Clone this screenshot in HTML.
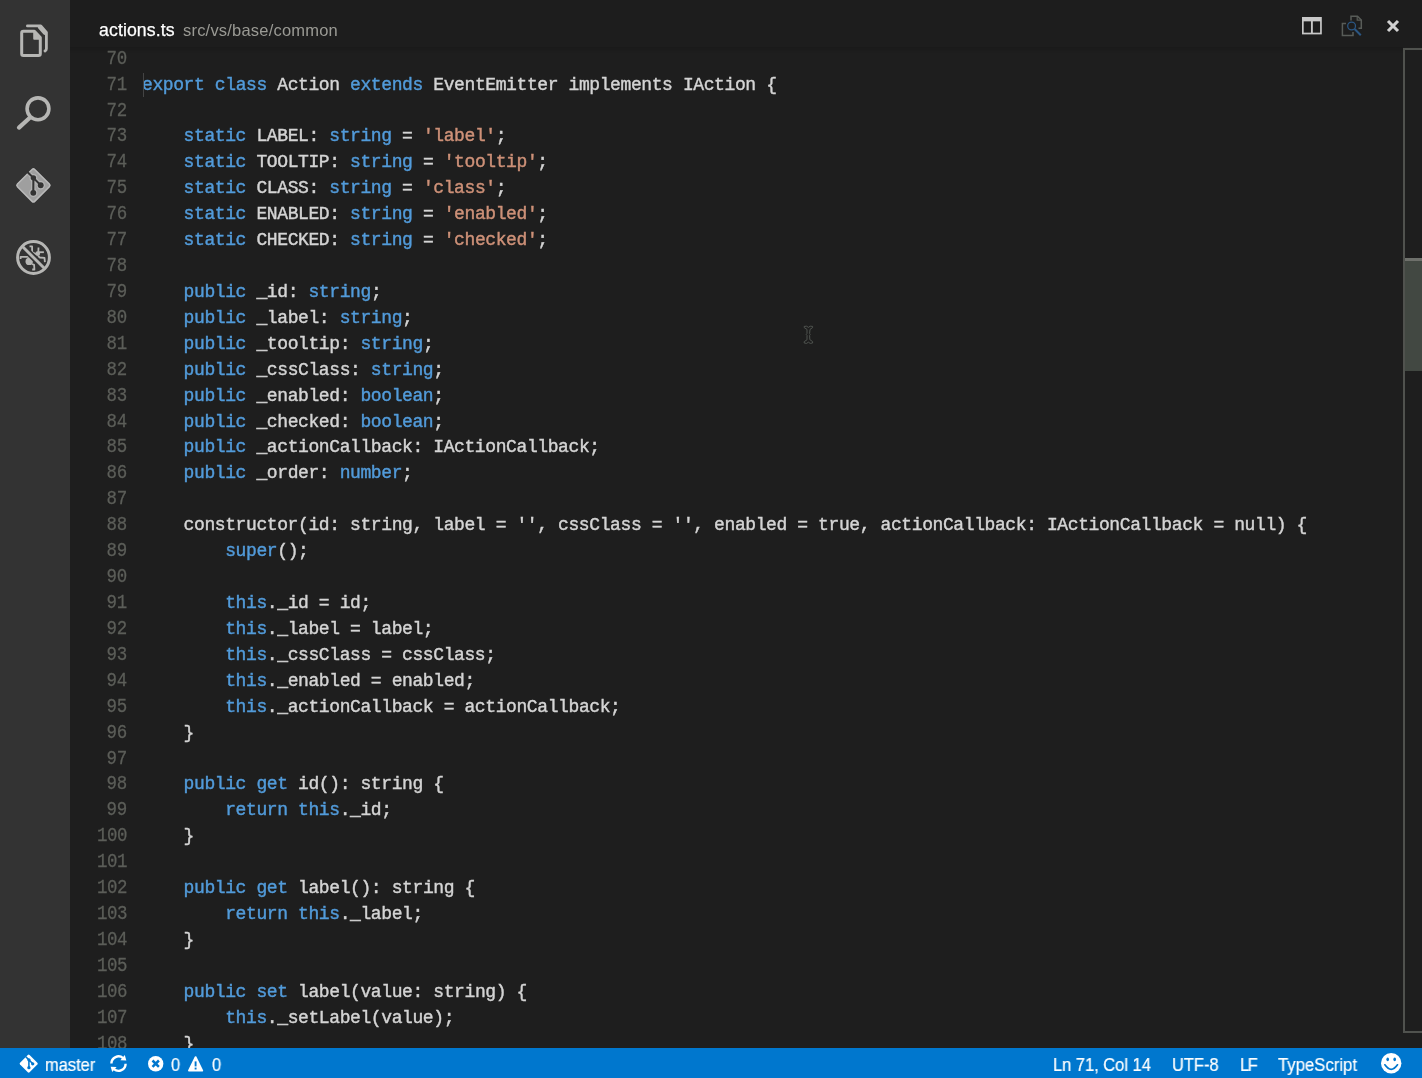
<!DOCTYPE html>
<html><head><meta charset="utf-8">
<style>
html,body{margin:0;padding:0;}
body{width:1422px;height:1078px;background:#1e1e1e;position:relative;overflow:hidden;font-family:"Liberation Sans",sans-serif;}
#act{position:absolute;left:0;top:0;width:70px;height:1048px;background:#333333;}
#title{position:absolute;left:70px;top:0;width:1352px;height:48px;background:#1e1e1e;}
#title .name{position:absolute;left:99px;top:19px;font-size:17.5px;color:#ffffff;line-height:20px;white-space:nowrap;}
#editor{position:absolute;left:70px;top:0;width:1352px;height:1048px;overflow:hidden;}
.ln,.cl{position:absolute;font-family:"Liberation Mono",monospace;font-size:18px;line-height:26px;height:26px;white-space:pre;letter-spacing:-0.4px;-webkit-text-stroke:0.42px;}
.ln{right:1295.0px;color:#5c5e59;text-align:right;-webkit-text-stroke:0.25px;transform:scale(0.97,1.09);transform-origin:100% 18px;}
.cl{left:142.0px;color:#d4d4d4;}
.k{color:#529bda;}
.s{color:#ce9178;}
#code{transform:translateZ(0);will-change:transform;position:absolute;left:0;top:0;width:1422px;height:1048px;overflow:hidden;}
#titlecover{position:absolute;left:70px;top:0;width:1352px;height:47px;background:#1d1d1d;}
#shadow{position:absolute;left:70px;top:47px;width:1333px;height:6px;background:linear-gradient(to bottom,rgba(0,0,0,0.13),rgba(0,0,0,0));}
#status{position:absolute;left:0;top:1048px;width:1422px;height:30px;background:#0077ce;color:#fff;font-size:16.5px;}
#ruler{position:absolute;left:1403px;top:48px;width:19px;height:985px;box-sizing:border-box;border-left:2px solid #50524e;border-top:2px solid #50524e;border-bottom:2px solid #50524e;}
#thumb{position:absolute;left:1405px;top:259px;width:17px;height:112px;background:#424842;}
#thumbmark{position:absolute;left:1405px;top:258px;width:17px;height:3px;background:#6e706b;}
#cursor{position:absolute;left:143px;top:73px;width:1px;height:24px;background:#444444;}

#tname{position:absolute;left:99px;top:19px;font-size:17.7px;color:#fff;line-height:22px;white-space:nowrap;letter-spacing:0.1px;will-change:transform;-webkit-text-stroke:0.25px;}
#tpath{position:absolute;left:183px;top:19px;font-size:16.5px;color:#9a9a94;line-height:22px;white-space:nowrap;letter-spacing:0.2px;will-change:transform;}
.sb{position:absolute;top:1052.5px;font-size:17.7px;line-height:24px;color:#fff;white-space:pre;transform:scaleX(0.93);transform-origin:0 0;will-change:transform;-webkit-text-stroke:0.2px;}
svg{position:absolute;overflow:visible;}
</style></head><body>
<div id="code">
<div class="ln" style="top:46px">70</div>
<div class="ln" style="top:72px">71</div>
<div class="cl" style="top:72px"><span class="k">export</span> <span class="k">class</span> Action <span class="k">extends</span> EventEmitter implements IAction {</div>
<div class="ln" style="top:98px">72</div>
<div class="ln" style="top:123px">73</div>
<div class="cl" style="top:123px">    <span class="k">static</span> LABEL: <span class="k">string</span> = <span class="s">&#x27;label&#x27;</span>;</div>
<div class="ln" style="top:149px">74</div>
<div class="cl" style="top:149px">    <span class="k">static</span> TOOLTIP: <span class="k">string</span> = <span class="s">&#x27;tooltip&#x27;</span>;</div>
<div class="ln" style="top:175px">75</div>
<div class="cl" style="top:175px">    <span class="k">static</span> CLASS: <span class="k">string</span> = <span class="s">&#x27;class&#x27;</span>;</div>
<div class="ln" style="top:201px">76</div>
<div class="cl" style="top:201px">    <span class="k">static</span> ENABLED: <span class="k">string</span> = <span class="s">&#x27;enabled&#x27;</span>;</div>
<div class="ln" style="top:227px">77</div>
<div class="cl" style="top:227px">    <span class="k">static</span> CHECKED: <span class="k">string</span> = <span class="s">&#x27;checked&#x27;</span>;</div>
<div class="ln" style="top:253px">78</div>
<div class="ln" style="top:279px">79</div>
<div class="cl" style="top:279px">    <span class="k">public</span> _id: <span class="k">string</span>;</div>
<div class="ln" style="top:305px">80</div>
<div class="cl" style="top:305px">    <span class="k">public</span> _label: <span class="k">string</span>;</div>
<div class="ln" style="top:331px">81</div>
<div class="cl" style="top:331px">    <span class="k">public</span> _tooltip: <span class="k">string</span>;</div>
<div class="ln" style="top:357px">82</div>
<div class="cl" style="top:357px">    <span class="k">public</span> _cssClass: <span class="k">string</span>;</div>
<div class="ln" style="top:383px">83</div>
<div class="cl" style="top:383px">    <span class="k">public</span> _enabled: <span class="k">boolean</span>;</div>
<div class="ln" style="top:409px">84</div>
<div class="cl" style="top:409px">    <span class="k">public</span> _checked: <span class="k">boolean</span>;</div>
<div class="ln" style="top:434px">85</div>
<div class="cl" style="top:434px">    <span class="k">public</span> _actionCallback: IActionCallback;</div>
<div class="ln" style="top:460px">86</div>
<div class="cl" style="top:460px">    <span class="k">public</span> _order: <span class="k">number</span>;</div>
<div class="ln" style="top:486px">87</div>
<div class="ln" style="top:512px">88</div>
<div class="cl" style="top:512px">    constructor(id: string, label = &#x27;&#x27;, cssClass = &#x27;&#x27;, enabled = true, actionCallback: IActionCallback = null) {</div>
<div class="ln" style="top:538px">89</div>
<div class="cl" style="top:538px">        <span class="k">super</span>();</div>
<div class="ln" style="top:564px">90</div>
<div class="ln" style="top:590px">91</div>
<div class="cl" style="top:590px">        <span class="k">this</span>._id = id;</div>
<div class="ln" style="top:616px">92</div>
<div class="cl" style="top:616px">        <span class="k">this</span>._label = label;</div>
<div class="ln" style="top:642px">93</div>
<div class="cl" style="top:642px">        <span class="k">this</span>._cssClass = cssClass;</div>
<div class="ln" style="top:668px">94</div>
<div class="cl" style="top:668px">        <span class="k">this</span>._enabled = enabled;</div>
<div class="ln" style="top:694px">95</div>
<div class="cl" style="top:694px">        <span class="k">this</span>._actionCallback = actionCallback;</div>
<div class="ln" style="top:720px">96</div>
<div class="cl" style="top:720px">    }</div>
<div class="ln" style="top:746px">97</div>
<div class="ln" style="top:771px">98</div>
<div class="cl" style="top:771px">    <span class="k">public</span> <span class="k">get</span> id(): string {</div>
<div class="ln" style="top:797px">99</div>
<div class="cl" style="top:797px">        <span class="k">return</span> <span class="k">this</span>._id;</div>
<div class="ln" style="top:823px">100</div>
<div class="cl" style="top:823px">    }</div>
<div class="ln" style="top:849px">101</div>
<div class="ln" style="top:875px">102</div>
<div class="cl" style="top:875px">    <span class="k">public</span> <span class="k">get</span> label(): string {</div>
<div class="ln" style="top:901px">103</div>
<div class="cl" style="top:901px">        <span class="k">return</span> <span class="k">this</span>._label;</div>
<div class="ln" style="top:927px">104</div>
<div class="cl" style="top:927px">    }</div>
<div class="ln" style="top:953px">105</div>
<div class="ln" style="top:979px">106</div>
<div class="cl" style="top:979px">    <span class="k">public</span> <span class="k">set</span> label(value: string) {</div>
<div class="ln" style="top:1005px">107</div>
<div class="cl" style="top:1005px">        <span class="k">this</span>._setLabel(value);</div>
<div class="ln" style="top:1031px">108</div>
<div class="cl" style="top:1031px">    }</div>
</div>
<div id="cursor"></div>
<div id="titlecover"></div>
<div id="shadow"></div>
<div id="act"></div>

<!-- explorer -->
<svg style="left:0;top:0" width="70" height="300" viewBox="0 0 70 300" fill="none" stroke="#b6b6b4" stroke-width="2.5" stroke-linejoin="round" stroke-linecap="round">
 <path d="M21.7,32.9 Q21.7,31.2 23.4,31.2 L34.4,31.2 L40.3,37.6 L40.3,53.8 Q40.3,55.5 38.6,55.5 L23.4,55.5 Q21.7,55.5 21.7,53.8 Z" stroke-width="3"/>
 <path d="M34.2,32.2 L34.2,38.8 L39.8,38.8 Z" stroke-width="2" fill="#b6b6b4"/>
 <path d="M27.4,25.9 L40.8,25.9 L46.4,32.3 L46.4,48.8 Q46.4,50.2 45,51" stroke-width="2.8"/>
 <path d="M39.8,27.2 L44.9,33" stroke-width="4"/>
 <!-- search -->
 <circle cx="38" cy="108.8" r="10.9" stroke-width="3.6"/>
 <path d="M29.8,117.8 L19,127.6" stroke-width="4.2"/>
</svg>
<!-- git activity -->
<svg style="left:14.86px;top:166.95px" width="36.8" height="36.8" viewBox="-17.6 -17.6 35.2 35.2">
 <rect x="-11.7" y="-11.7" width="23.4" height="23.4" rx="1.8" transform="rotate(45)" fill="#9f9f9f" stroke="#bababa" stroke-width="1.4"/>
 <g fill="none" stroke="#b4b4b4" stroke-width="4.2"><path d="M-3.6,-10.8 L0,-7.2 L-0.1,7.1 M0,-7.2 L7,-0.1"/></g>
 <g fill="#b4b4b4"><circle cx="0" cy="-7.2" r="3.8"/><circle cx="7" cy="-0.1" r="4"/><circle cx="-0.1" cy="7.1" r="4"/></g>
 <path d="M-6.2,-13.4 L0,-7.2 L-0.1,7.1 M0,-7.2 L7,-0.1" stroke="#333" stroke-width="2" fill="none"/>
 <circle cx="0" cy="-7.2" r="2.6" fill="#333"/><circle cx="7" cy="-0.1" r="2.8" fill="#333"/><circle cx="-0.1" cy="7.1" r="2.8" fill="#333"/>
</svg>
<!-- debug -->
<svg style="left:14.63px;top:238.7px" width="37" height="37" viewBox="-18.5 -18.5 37 37" fill="none" stroke="#b6b6b4">
 <circle r="15.9" stroke-width="3"/>
 <g stroke-width="1.8" stroke-linejoin="round">
  <circle cx="-4.3" cy="3.9" r="3.7" fill="#b6b6b4" stroke="none"/>
  <circle cx="4.2" cy="-3.8" r="2.4" fill="#b6b6b4" stroke="none"/>
  <path d="M-12.9,1.6 L-12.9,-0.6 L-5,-0.6 L-2,2"/>
  <path d="M-1.5,6.5 L0.6,7.4 L0.9,12 L-1.3,12"/>
  <path d="M-4,-11.1 L-1.4,-11.1 L-1.4,-5.5 L3,-3"/>
  <path d="M5,-10 L4.8,-5"/>
  <path d="M5,-5.3 L10.4,-5.3"/>
  <path d="M4.5,-1.5 L6.3,0 L11,0.4 L11.4,4.6"/>
 </g>
 <path d="M-9.4,-9.4 L9.4,9.4" stroke="#333" stroke-width="6.4"/>
 <path d="M-11.3,-11.3 L11.3,11.3" stroke-width="2.9"/>
</svg>
<!-- split editor -->
<svg style="left:1301.7px;top:16.7px" width="19.8" height="17.4" viewBox="0 0 21 18" preserveAspectRatio="none">
 <rect x="0.9" y="0.9" width="19.2" height="16.2" fill="none" stroke="#c8c8c8" stroke-width="1.8"/>
 <rect x="0.9" y="0.9" width="19.2" height="3.6" fill="#c8c8c8"/>
 <rect x="9.5" y="1" width="2" height="16" fill="#c8c8c8"/>
</svg>
<!-- show opened editors (dim) -->
<svg style="left:1341px;top:14.6px" width="22" height="22" viewBox="0 0 22 22" fill="none">
 <path d="M10,5.6 L10,1.2 L16.5,1.2 L20.3,5 L20.3,13.2 L17.5,13.2" stroke="#585c58" stroke-width="1.5"/>
 <path d="M16.2,1.4 L16.2,5.2 L20,5.2" stroke="#585c58" stroke-width="1.2"/>
 <path d="M5,8.4 L1.4,8.4 L1.4,20.4 L12,20.4 L12,17" stroke="#585c58" stroke-width="1.5"/>
 <circle cx="10.6" cy="11" r="3.9" stroke="#2b5784" stroke-width="1.25"/>
 <path d="M13.6,14 L19.8,20.2" stroke="#2b5784" stroke-width="2"/>
</svg>
<!-- close -->
<svg style="left:1385.9px;top:18.8px" width="14" height="14" viewBox="-7 -7 14 14">
 <path d="M-5,-5 L5,5 M5,-5 L-5,5" stroke="#d2d2d2" stroke-width="3.1"/>
</svg>
<!-- ibeam -->
<svg style="left:803px;top:325px" width="11" height="20" viewBox="0 0 11 20" fill="none" stroke="#555955" stroke-width="0.9">
 <path d="M1.2,1.4 L3.6,1.2 L5.4,2.4 L7.2,1.2 L9.6,1.4 L9.6,2.6 L7,4.4 L6.6,8.4 L7.2,9.4 L6.6,10.4 L6.8,14.6 L9.6,16.6 L9.6,18 L7.2,18.4 L5.4,17.2 L3.6,18.4 L1.2,18 L1.2,16.6 L4,14.8 L4,10.4 L3.2,9.4 L4,8.4 L4,4.4 L1.2,2.6 Z"/>
</svg>
<div id="ruler"></div><div id="thumb"></div><div id="thumbmark"></div>
<div id="tname">actions.ts</div>
<div id="tpath">src/vs/base/common</div>
<div id="status"></div>
<div class="sb" style="left:44.5px">master</div>
<div class="sb" style="left:170.5px">0</div>
<div class="sb" style="left:211.7px">0</div>
<div class="sb" style="left:1053.2px">Ln 71, Col 14</div>
<div class="sb" style="left:1172.2px">UTF-8</div>
<div class="sb" style="left:1240.2px;letter-spacing:-1.6px">LF</div>
<div class="sb" style="left:1278px;transform:scaleX(0.945)">TypeScript</div>
<!-- status git -->
<svg style="left:19.45px;top:1054.4px" width="19.4" height="19.4" viewBox="-17.6 -17.6 35.2 35.2">
 <rect x="-12.2" y="-12.2" width="24.4" height="24.4" rx="2.2" transform="rotate(45)" fill="#fff"/>
 <path d="M-5.2,-12.6 L0.4,-7 L0.4,7 M0.4,-7 L7.3,0.2" stroke="#0077ce" stroke-width="2.8" fill="none"/>
 <circle cx="0.4" cy="-7" r="3" fill="#0077ce"/><circle cx="7.3" cy="0.2" r="3" fill="#0077ce"/><circle cx="0.4" cy="7.2" r="3" fill="#0077ce"/>
</svg>
<!-- sync -->
<svg style="left:107.8px;top:1053px" width="21" height="21" viewBox="-10.5 -10.5 21 21">
 <path d="M-7.1,0 A7.1,7.1 0 0 1 4.6,-5.4" stroke="#fff" stroke-width="2.4" fill="none"/>
 <path d="M6.3,-8.4 L7.8,-3 L1.9,-3.2 Z" fill="#fff"/>
 <path d="M7.1,0.2 A7.1,7.1 0 0 1 -4.6,5.6" stroke="#fff" stroke-width="2.4" fill="none"/>
 <path d="M-6.3,8.6 L-7.8,3.2 L-1.9,3.4 Z" fill="#fff"/>
</svg>
<!-- error -->
<svg style="left:148px;top:1056px" width="15.4" height="15.4" viewBox="-7.7 -7.7 15.4 15.4">
 <circle r="7.7" fill="#fff"/>
 <path d="M-3.2,-3.2 L3.2,3.2 M3.2,-3.2 L-3.2,3.2" stroke="#0077ce" stroke-width="2.5"/>
</svg>
<!-- warning -->
<svg style="left:188px;top:1055.6px" width="15.2" height="15.6" viewBox="0 0 15.2 15.6">
 <path d="M7.6,1.2 L14.2,14.6 L1,14.6 Z" fill="#fff" stroke="#fff" stroke-width="2" stroke-linejoin="round"/>
 <path d="M7.6,5.4 L7.6,10.4" stroke="#0077ce" stroke-width="1.9"/>
 <rect x="6.65" y="11.6" width="1.9" height="1.9" fill="#0077ce"/>
</svg>
<!-- smiley -->
<svg style="left:1380.5px;top:1053.3px" width="20.4" height="20.4" viewBox="-10.2 -10.2 20.4 20.4">
 <circle r="10.2" fill="#fff"/>
 <ellipse cx="-3.5" cy="-3.9" rx="1.3" ry="1.9" fill="#0077ce"/><ellipse cx="3.5" cy="-3.9" rx="1.3" ry="1.9" fill="#0077ce"/>
 <path d="M-6.3,1.6 Q0,10.6 6.3,1.6" stroke="#0077ce" stroke-width="1.7" fill="none" stroke-linecap="round"/>
</svg>

</body></html>
